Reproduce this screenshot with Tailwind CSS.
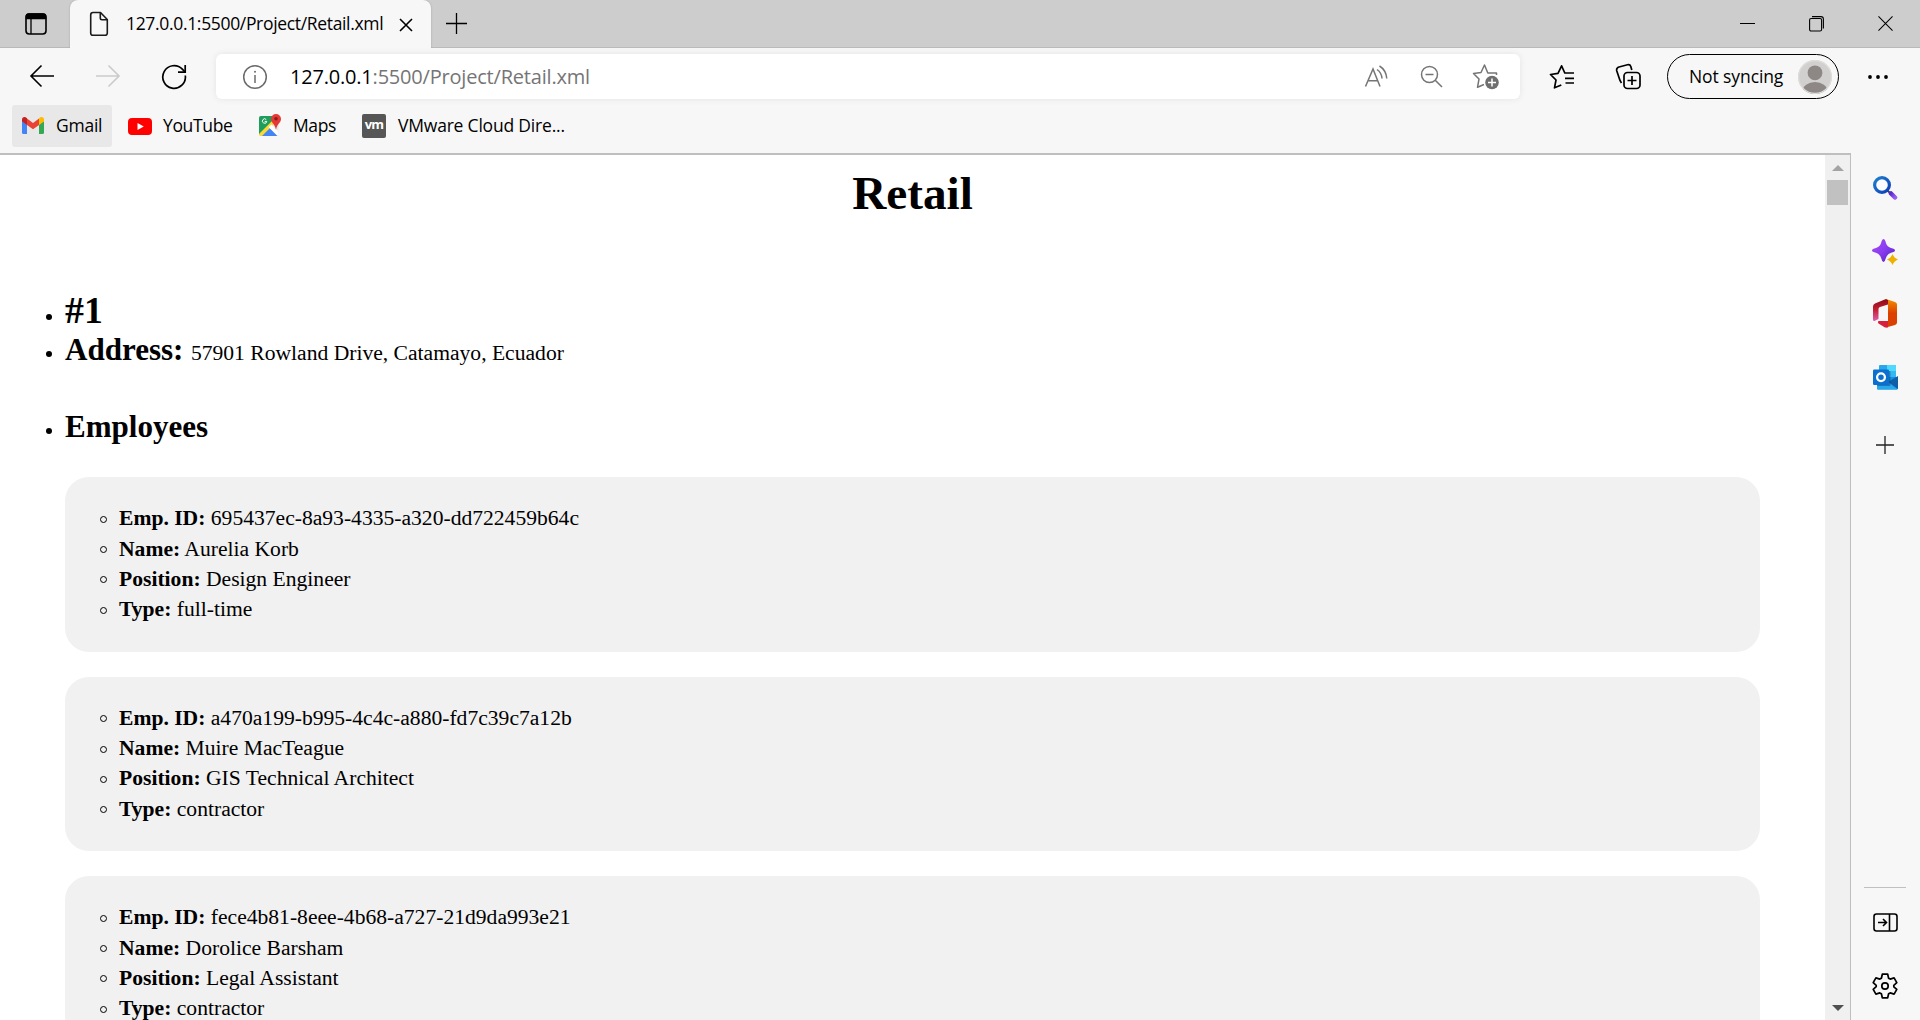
<!DOCTYPE html>
<html lang="en">
<head>
<meta charset="utf-8">
<title>127.0.0.1:5500/Project/Retail.xml</title>
<script src="https://cdn.jsdelivr.net/npm/@tailwindcss/browser@4"></script>
</head>
<body class="w-[1920px] h-[1020px] overflow-hidden bg-[#f7f7f7] text-black flex flex-col font-['Open_Sans',sans-serif]">

<!-- Tab strip -->
<header class="h-12 shrink-0 flex items-start bg-[#cdcdcd] shadow-[inset_0_-1px_0_#b9b9b9]">
  <div class="w-[70px] h-12 pl-[25px] pt-[13px]">
    <svg width="22" height="22" viewBox="0 0 22 22" fill="none" stroke="#000" stroke-width="1.6"><rect x="1" y="1" width="20" height="20" rx="3.2"/><path d="M1.5 5V3.5Q1.5 1 4 1H18Q20.500 1 20.500 3.500V5.500H1.500Z" fill="#000"/><path d="M6 6V21" stroke-width="1.300"/></svg>
  </div>
  <div class="w-[361px] h-12 bg-[#f7f7f7] rounded-t-lg flex items-start shadow-[0_0_2px_#a0a0a0] [clip-path:inset(-3px_-3px_0_-3px)]">
    <svg class="ml-[19px] mt-[11px]" width="20" height="26" viewBox="0 0 20 26" fill="none" stroke="#1b1b1b" stroke-width="1.600" stroke-linejoin="round"><path d="M4 1.500H11.500L18.300 8.500V22Q18.300 24.300 16 24.300H4Q1.700 24.300 1.700 22V4Q1.700 1.500 4 1.500Z"/><path d="M11.300 1.800V7Q11.300 8.700 13 8.700H18"/></svg>
    <span class="ml-[17px] mt-[10px] w-[273px] text-[17.500px] leading-[26px] tracking-[-0.33px] whitespace-nowrap">127.0.0.1:5500/Project/Retail.xml</span>
    <svg class="mt-[18px] shrink-0" width="14" height="14" viewBox="0 0 14 14" stroke="#000" stroke-width="1.600"><path d="M1 1L13 13M13 1L1 13"/></svg>
  </div>
  <svg class="ml-[15px] mt-[13px]" width="21" height="21" viewBox="0 0 21 21" stroke="#000" stroke-width="1.300"><path d="M10.500 0V21M0 10.500H21"/></svg>
  <div class="ml-auto mr-[27px] mt-4 flex gap-[54px]">
    <svg width="15" height="16" viewBox="0 0 15 16" stroke="#000"><path d="M0 7.500H15"/></svg>
    <svg width="15" height="16" viewBox="0 0 15 16" fill="none" stroke="#000" stroke-width="1.100"><rect x=".6" y="2.500" width="12" height="12.500" rx="1.500"/><path d="M3 .6H12Q14.400 .6 14.400 3V12.500"/></svg>
    <svg width="15" height="15" viewBox="0 0 16 16" stroke="#000" stroke-width="1.100"><path d="M.5 .5L15.500 15.500M15.500 .5L.5 15.500"/></svg>
  </div>
</header>

<!-- Toolbar -->
<nav class="h-[57px] shrink-0 flex items-start pt-1.5">
  <div class="w-[216px] h-[45px] flex items-center pl-[29px]">
    <svg class="-mt-px" width="26" height="24" viewBox="0 0 26 24" fill="none" stroke="#000" stroke-width="1.600"><path d="M12.500 1.500L2 12L12.500 22.500M2 12H25"/></svg>
    <svg class="ml-10 -mt-px" width="26" height="24" viewBox="0 0 26 24" fill="none" stroke="#cbcbcb" stroke-width="1.600"><path d="M13.500 1.500L24 12L13.500 22.500M24 12H1"/></svg>
    <svg class="ml-10" width="26" height="26" viewBox="0 0 26 26" fill="none" stroke="#000" stroke-width="1.700"><path d="M24.300 11.500A11.300 11.300 0 1 1 21.300 5.200L24 8"/><path d="M24.200 1V8.200H17"/></svg>
  </div>
  <div class="w-[1304px] h-[45px] bg-white rounded-md flex items-center shadow-[0_0_6px_#e4e4e4]">
    <svg class="ml-[26px]" width="26" height="26" viewBox="0 0 26 26" fill="none" stroke="#6b6b6b" stroke-width="1.500"><circle cx="13" cy="13" r="11.300"/><path d="M13 11V19"/><circle cx="13" cy="7.800" r="1" fill="#6b6b6b" stroke="none"/></svg>
    <span class="ml-[22px] text-[20px] tracking-[-0.2px] text-[#757575] whitespace-nowrap"><span class="text-black">127.0.0.1</span>:5500/Project/Retail.xml</span>
    <div class="ml-auto flex items-center mr-[21px]">
      <svg width="25" height="26" viewBox="0 0 25 26" fill="none" stroke="#757575" stroke-width="1.500"><path d="M1.500 22.500L9 5L16 22.500M4 16.800H14"/><path d="M13 5.500Q17.500 8.500 18 14.500M15.500 2Q22 6 22.800 14.500"/></svg>
      <svg class="ml-[31px]" width="24" height="24" viewBox="0 0 24 24" fill="none" stroke="#757575" stroke-width="1.500"><circle cx="9.500" cy="9.500" r="8"/><path d="M5.500 9.500H13.500M15 15L22 22"/></svg>
      <svg class="ml-[28px]" width="27" height="27" viewBox="0 0 27 27" fill="none" stroke="#757575" stroke-width="1.500" stroke-linejoin="round"><path d="M24.500 12V10H15.800L12.500 2L9 9.500L1.500 10.500L7 16L5.500 24.300L12 21.500"/><circle cx="20" cy="19.500" r="6.800" fill="#6e6e6e" stroke="none"/><path d="M20 15.500V23.500M16 19.500H24" stroke="#fff"/></svg>
    </div>
  </div>
  <div class="h-[45px] flex items-center">
    <svg class="ml-[29px]" width="27" height="26" viewBox="0 0 27 26" fill="none" stroke="#000" stroke-width="1.700" stroke-linejoin="round"><path d="M18 9H15.800L12.600 1.800L9 9.300L1.500 10.500L7 16L5.500 23.800L12.300 21"/><path d="M18 9H25M16 14.300H25M16.500 19H25"/></svg>
    <svg class="ml-[39px]" width="27" height="28" viewBox="0 0 27 28" fill="none" stroke="#000" stroke-width="1.700" stroke-linejoin="round"><rect x="9" y="9.500" width="16" height="16" rx="3.500"/><path d="M17 13V22M12.500 17.500H21.500M6.500 20Q5 18 4.500 16L1.800 8Q1 5 4 4L12.500 1.800Q15 1.200 15.800 3.500L16.800 7"/></svg>
    <div class="ml-[25px] w-[172px] h-[45px] rounded-full border-[1.5px] border-black flex items-center">
      <span class="ml-[21px] w-[96px] text-[17.500px] tracking-[-0.1px] whitespace-nowrap">Not syncing</span>
      <svg class="ml-[13px] shrink-0" width="34" height="34" viewBox="0 0 34 34"><defs><clipPath id="av"><circle cx="17" cy="17" r="17"/></clipPath></defs><circle cx="17" cy="17" r="17" fill="#d2d0ce"/><g clip-path="url(#av)" fill="#8d8885"><circle cx="17" cy="12.800" r="7.400"/><ellipse cx="17" cy="31" rx="12.500" ry="9"/></g><circle cx="17" cy="17" r="16.400" fill="none" stroke="#dedddb" stroke-width="1.200"/></svg>
    </div>
    <svg class="ml-[28px]" width="22" height="6" viewBox="0 0 22 6"><circle cx="3" cy="3" r="1.900"/><circle cx="11" cy="3" r="1.900"/><circle cx="19" cy="3" r="1.900"/></svg>
  </div>
</nav>

<!-- Favourites bar -->
<div class="h-12 shrink-0 flex items-start pl-3 text-[17.500px]">
  <div class="w-[100px] h-[42px] rounded-[3px] bg-[#e8e8e8] flex items-center pl-[10px]">
    <svg class="-mt-px" width="22" height="17" viewBox="0 0 22 17"><path d="M0 3V15.500Q0 17 1.500 17H5V7.500L2 3Z" fill="#4285f4"/><path d="M17 7.500V17H20.500Q22 17 22 15.500V3Z" fill="#34a853"/><path d="M17 2L22 5V2.800Q22 0 19.500 0Q18.500 0 17 1.200Z" fill="#fbbc04"/><path d="M17 1.500V8L22 4.500V2Z" fill="#fbbc04"/><path d="M5 1.500L11 6L17 1.500V8L11 12.300L5 8Z" fill="#ea4335"/><path d="M0 2.700Q0 0 2.500 0Q3.500 0 5 1.200V8L0 4.300Z" fill="#c5221f"/></svg>
    <span class="ml-[12px] -mt-0.5 tracking-[-0.25px]">Gmail</span>
  </div>
  <div class="h-[42px] w-[131px] ml-4 flex items-center">
    <svg width="24" height="17" viewBox="0 0 24 17"><rect width="24" height="17" rx="4" fill="#f00"/><path d="M9.500 5L15.800 8.500L9.500 12Z" fill="#fff"/></svg>
    <span class="ml-[11px] -mt-0.5 tracking-[-0.35px]">YouTube</span>
  </div>
  <div class="h-[42px] w-[103px] flex items-center">
    <svg class="-mt-0.5" width="23" height="23" viewBox="0 0 23 23"><defs><clipPath id="mp"><rect y="2" width="19.500" height="20" rx="2"/></clipPath></defs><g clip-path="url(#mp)"><rect y="2" width="20" height="20" fill="#e8e8e8"/><path d="M0 2H20L0 21Z" fill="#1e9e5a"/><path d="M1 22L10 13L19 22Z" fill="#4285f4"/><path d="M0 20L14 6L16 9L2 23H0Z" fill="#fdd835"/><path d="M9.500 13L12.500 10.500L20 18V22H18.500Z" fill="#fff"/></g><path d="M7.200 5.500A2.200 2.200 0 1 0 7.800 7.400H5.700" fill="none" stroke="#fff" stroke-width="1"/><path d="M17 0A5 5 0 0 1 22 5C22 9 18 9.500 17 16C16 9.500 12 9 12 5A5 5 0 0 1 17 0Z" fill="#e53935"/><circle cx="17" cy="4.800" r="1.800" fill="#8e1b16"/></svg>
    <span class="ml-[11px] -mt-0.5 tracking-[-0.4px]">Maps</span>
  </div>
  <div class="h-[42px] flex items-center">
    <div class="w-6 h-6 rounded-[2px] bg-[#565656] text-white font-bold text-[13px] leading-[21px] text-center tracking-[-0.8px]">vm</div>
    <span class="ml-[12px] -mt-0.5 tracking-[-0.2px]">VMware Cloud Dire...</span>
  </div>
</div>

<div class="flex-1 min-h-0 flex">
  <!-- Page -->
  <div class="w-[1851px] h-full flex border-t-2 border-r border-[#bfbfbf] bg-white">
    <main class="w-[1825px] h-[865px] overflow-hidden font-['Liberation_Serif',serif] text-[21.600px]">
      <h1 class="mt-[11px] h-[54px] leading-[54px] text-[47.250px] font-bold text-center">Retail</h1>
      <ul class="mt-[68px] pl-[46px] pr-[65px]">
        <li class="h-[44px] flex items-start"><i class="w-1.5 h-1.5 mt-[26px] rounded-full bg-black"></i><b class="ml-[13px] text-[37.800px] leading-[44px]">#1</b></li>
        <li class="h-[37px] flex items-start"><i class="w-1.5 h-1.5 mt-[19px] rounded-full bg-black"></i><p class="ml-[13px] leading-[36px]"><b class="text-[31.050px]">Address:</b> <span class="ml-[2px]">57901 Rowland Drive, Catamayo, Ecuador</span></p></li>
        <li class="mt-[40px] h-[37px] flex items-start"><i class="w-1.5 h-1.5 mt-[19px] rounded-full bg-black"></i><b class="ml-[13px] text-[31.050px] leading-[36px]">Employees</b></li>
      </ul>
      <div id="cards" class="mt-[31px] ml-[65px] w-[1695px] flex flex-col gap-[25px]"></div>
    </main>
    <div class="w-[25px] h-[865px] bg-[#f0f0f0] flex flex-col items-center">
      <svg class="mt-[10px]" width="12" height="6" viewBox="0 0 12 6"><path d="M0 6L6 0L12 6Z" fill="#a3a3a3"/></svg>
      <div class="mt-[9px] w-[21px] h-[25px] bg-[#c1c1c1]"></div>
      <svg class="mt-auto mb-[9px]" width="12" height="6" viewBox="0 0 12 6"><path d="M0 0L6 6L12 0Z" fill="#505050"/></svg>
    </div>
  </div>

  <!-- Sidebar -->
  <aside class="w-[69px] h-[867px] flex flex-col items-center pt-[22px] pr-px">
    <svg width="26" height="26" viewBox="0 0 26 26"><defs><linearGradient id="s1" x1="0" y1="0" x2="1" y2="1"><stop stop-color="#1f7fd0"/><stop offset="1" stop-color="#0b3fb5"/></linearGradient><linearGradient id="s2" x1="0" y1="0" x2="1" y2="1"><stop stop-color="#5a2bd0"/><stop offset="1" stop-color="#9a5cf5"/></linearGradient></defs><path d="M15.500 15.500L19 19" stroke="#444" stroke-width="2"/><path d="M19 18.500L23 22.500" stroke="url(#s2)" stroke-width="4.500" stroke-linecap="round"/><circle cx="10" cy="10" r="7.400" fill="#fafcff" stroke="url(#s1)" stroke-width="3.200"/></svg>
    <svg class="mt-[37px]" width="28" height="28" viewBox="0 0 28 28"><defs><linearGradient id="d1" x1="0" y1="0" x2="1" y2="1"><stop stop-color="#a64bf5"/><stop offset=".5" stop-color="#8a3cf0"/><stop offset="1" stop-color="#4a1fb8"/></linearGradient></defs><path d="M12.500 1Q14 1 14.500 3.500Q15.500 8.500 20 10Q24 10.800 24 12.500Q24 14 20 14.800Q15.500 16.500 14.500 21Q14 24 12.500 24Q11 24 10.500 21Q9.500 16.500 5 14.800Q1 14 1 12.500Q1 10.800 5 10Q9.500 8.500 10.500 3.500Q11 1 12.500 1Z" fill="url(#d1)"/><path d="M21.500 16Q23 20 27 21.500Q23 23 21.500 27Q20 23 16 21.500Q20 20 21.500 16Z" fill="#f0b000"/></svg>
    <svg class="mt-[33px]" width="24" height="29" viewBox="0 0 24 29"><defs><linearGradient id="o1" x1="0" y1="0" x2="0" y2="1"><stop stop-color="#f39000"/><stop offset=".5" stop-color="#dc4000"/></linearGradient><linearGradient id="o2" x1="0" y1="0" x2="0" y2="1"><stop stop-color="#8c0a14"/><stop offset=".5" stop-color="#c52035"/><stop offset="1" stop-color="#dd60b0"/></linearGradient></defs><path d="M13 0L22 3Q24 3.600 24 5.500V23.500Q24 25.300 22 26L13 28.500L15 24V5Z" fill="url(#o1)"/><path d="M13 0L15 1.200V5.500L7 8Q5.500 8.600 5.500 10V20L1.500 22Q0 22.200 0 20.500V7.500Q0 5.500 2 4.500Z" fill="url(#o2)"/><path d="M15 22V28.500H12L5.500 24.500Q4 22.500 6 22Z" fill="#d9203a"/></svg>
    <svg class="mt-[37px]" width="25" height="25" viewBox="0 0 25 25"><path d="M6 1Q6 0 7 0H22Q23 0 23 1V14H6Z" fill="#28a8ea"/><path d="M14 0H22Q23 0 23 1V6H14Z" fill="#50d9ff"/><path d="M14 6H23V12H14Z" fill="#35b8f1"/><path d="M4 12H25V23Q25 24.500 23.500 24.500H5Q4 24.500 4 23Z" fill="#1490df"/><path d="M25 11V24L15 17Z" fill="#0f5fa8"/><path d="M4 20L15 17L24.500 24.500H5Q4 24.500 4 23Z" fill="#28a8ea"/><rect x="4" y="6" width="13.500" height="15" rx="1" fill="#0a3f7a" opacity=".45"/><rect y="4.500" width="16" height="15.500" rx="1.200" fill="#0a6fcf"/><circle cx="8" cy="12.200" r="3.900" fill="none" stroke="#fff" stroke-width="2.300"/></svg>
    <svg class="mt-[46px]" width="18" height="18" viewBox="0 0 18 18" stroke="#222" stroke-width="1.300"><path d="M9 0V18M0 9H18"/></svg>
    <div class="mt-auto w-[42px] h-px bg-[#c0c0c0]"></div>
    <svg class="mt-[25px]" width="25" height="19" viewBox="0 0 25 19" fill="none" stroke="#000" stroke-width="1.600"><rect x="1" y="1" width="23" height="17" rx="2.500"/><path d="M16.500 1V18M5 9.500H13M10 6L13.500 9.500L10 13"/></svg>
    <svg class="mt-[41px] mb-[21px]" width="26" height="26" viewBox="0 0 26 26" fill="none" stroke="#000" stroke-width="1.700" stroke-linejoin="round"><circle cx="13" cy="13" r="3.200"/><path d="M10.300 1.200H15.700L16.600 5.200L18.200 6.100L22.100 4.900L24.800 9.600L21.800 12.300V13.800L24.800 16.400L22.100 21.100L18.200 19.900L16.600 20.800L15.700 24.800H10.300L9.400 20.800L7.800 19.900L3.900 21.100L1.200 16.400L4.200 13.700V12.300L1.200 9.600L3.900 4.900L7.800 6.100L9.400 5.200Z"/></svg>
  </aside>
</div>

<script>
const employees = [
  ["695437ec-8a93-4335-a320-dd722459b64c", "Aurelia Korb", "Design Engineer", "full-time"],
  ["a470a199-b995-4c4c-a880-fd7c39c7a12b", "Muire MacTeague", "GIS Technical Architect", "contractor"],
  ["fece4b81-8eee-4b68-a727-21d9da993e21", "Dorolice Barsham", "Legal Assistant", "contractor"]
];
const labels = ["Emp. ID:", "Name:", "Position:", "Type:"];
document.getElementById("cards").innerHTML = employees.map(e =>
  '<ul class="h-[174.500px] shrink-0 rounded-[24px] bg-[#f1f1f1] pl-[35px] pt-[26px]">' +
  e.map((v, i) => '<li class="h-[30.350px] leading-[30px] flex items-center"><i class="w-[7px] h-[7px] mt-[2px] rounded-full border border-black"></i><span class="ml-[12px]"><b>' + labels[i] + '</b> ' + v + '</span></li>').join("") +
  '</ul>').join("");
</script>
</body>
</html>
